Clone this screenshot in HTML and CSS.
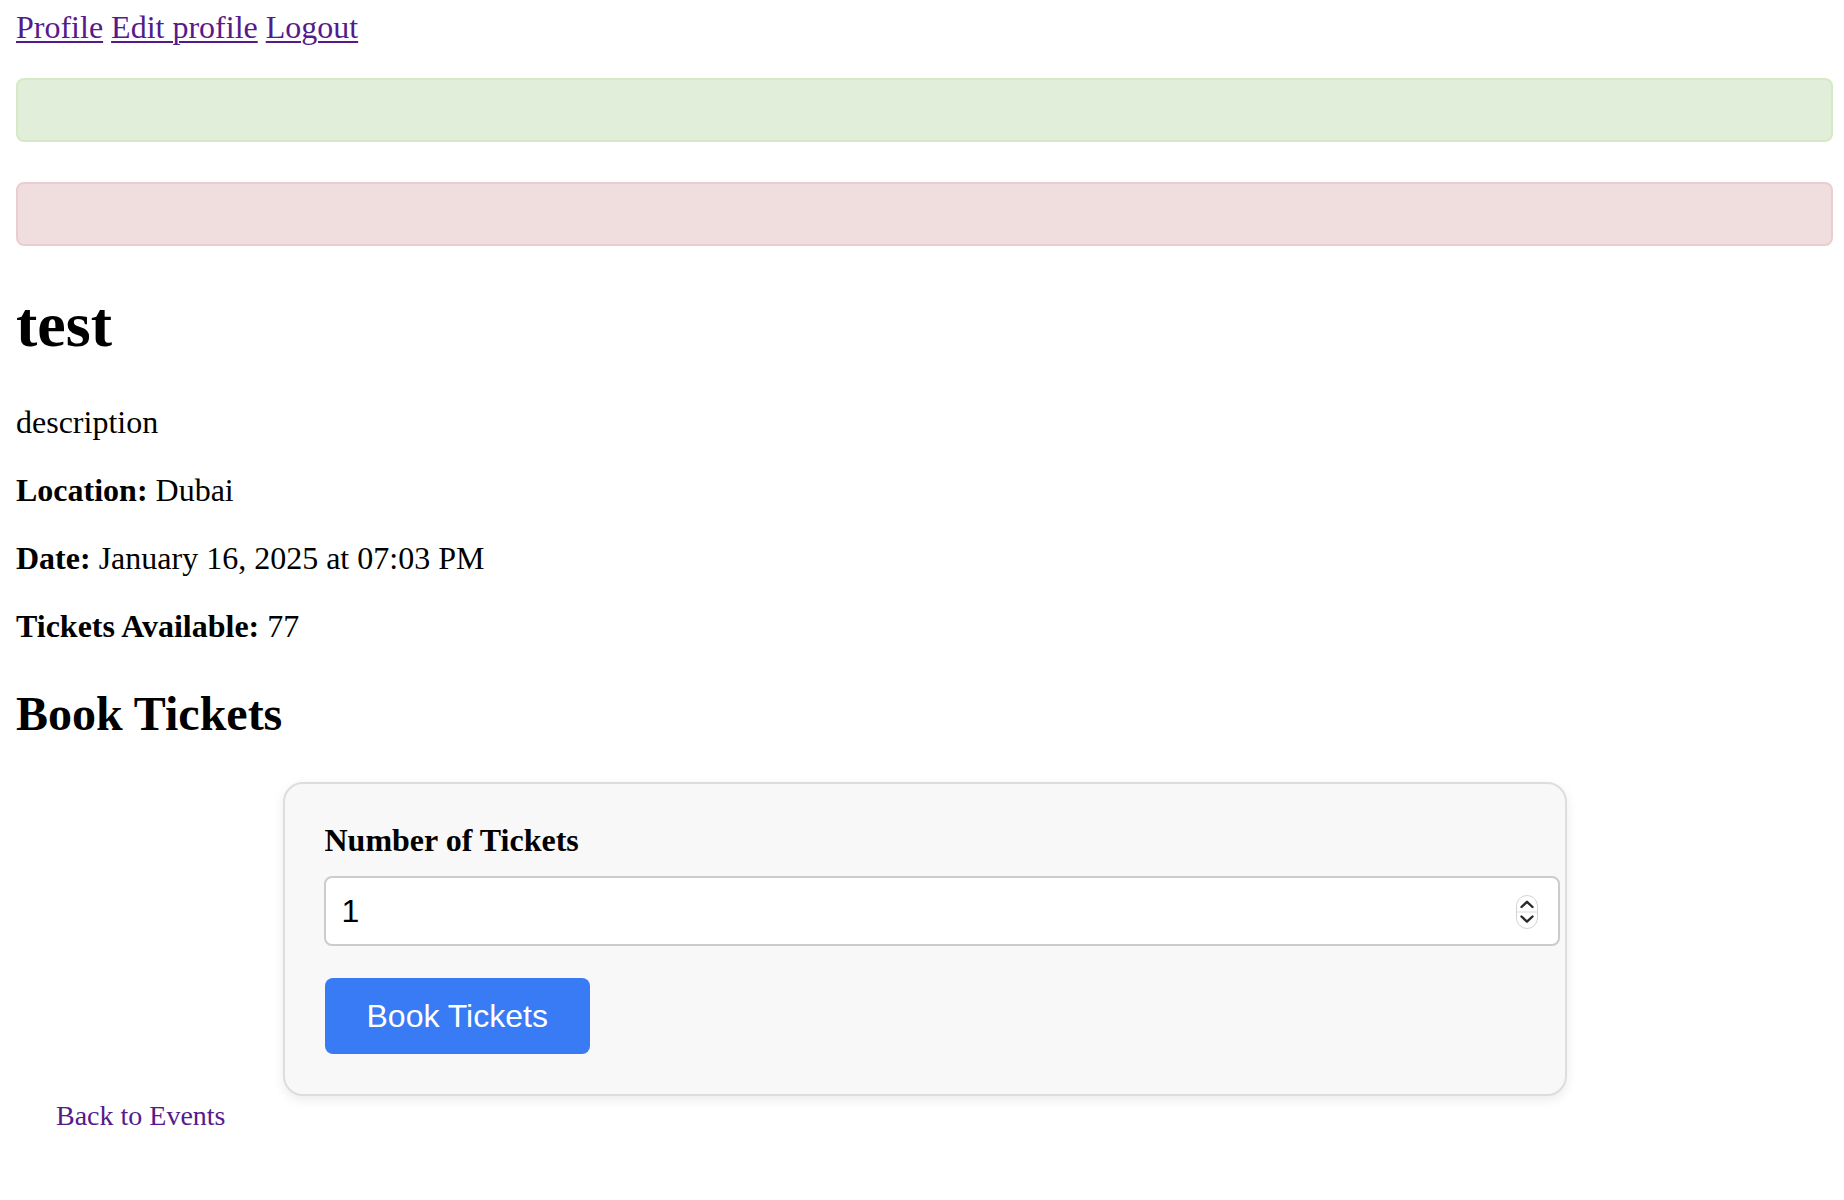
FILE: index.html
```html
<!DOCTYPE html>
<html>
<head>
<meta charset="utf-8">
<title>test</title>
<link rel="stylesheet" href="styles.css">
</head>
<body>
<nav class="topnav">
  <a href="#" class="navlink">Profile</a>
  <a href="#" class="navlink">Edit profile</a>
  <a href="#" class="navlink">Logout</a>
</nav>
<div class="alert alert-success"></div>
<div class="alert alert-danger"></div>
<h1 class="title">test</h1>
<p class="info">description</p>
<p class="info"><strong>Location:</strong> Dubai</p>
<p class="info"><strong>Date:</strong> January 16, 2025 at 07:03 PM</p>
<p class="info"><strong>Tickets Available:</strong> 77</p>
<h2 class="subtitle">Book Tickets</h2>
<form class="card">
  <label class="field-label" for="tickets">Number of Tickets</label>
  <div class="input-wrap">
    <input class="num-input" id="tickets" type="number" value="1" min="1">
    <span class="spinner">
      <svg width="22" height="34" viewBox="0 0 22 34">
        <rect x="0.5" y="0.5" width="21" height="33" rx="10.5" fill="#ffffff" stroke="#d4d4d4"/>
        <line x1="1" y1="17" x2="21" y2="17" stroke="#dcdcdc" stroke-width="1"/>
        <path d="M5.5 12 L11 6.8 L16.5 12" fill="none" stroke="#2a2a2a" stroke-width="2.4" stroke-linecap="round" stroke-linejoin="round"/>
        <path d="M5.5 21.5 L11 26.7 L16.5 21.5" fill="none" stroke="#2a2a2a" stroke-width="2.4" stroke-linecap="round" stroke-linejoin="round"/>
      </svg>
    </span>
  </div>
  <button class="btn" type="button">Book Tickets</button>
</form>
<a href="#" class="back">Back to Events</a>
</body>
</html>
```

FILE: styles.css
```css
html, body {
  background: #ffffff;
}
body {
  margin: 0 11px 0 16px;
  padding-top: 9px;
  font-family: "Liberation Serif", "Times New Roman", serif;
  font-size: 32px;
  line-height: 36px;
  color: #000000;
}
.topnav {
  line-height: 36px;
}
.navlink {
  color: #551a8b;
  text-decoration: underline;
  text-decoration-thickness: 2px;
  text-underline-offset: 3px;
}
.alert {
  border: 2px solid transparent;
  border-radius: 8px;
  box-sizing: border-box;
  height: 64px;
}
.alert-success {
  margin-top: 33px;
  margin-bottom: 40px;
  background: #e1eed9;
  border-color: #d6e9c6;
}
.alert-danger {
  margin-bottom: 40px;
  background: #f0dede;
  border-color: #ebccd1;
}
.title {
  font-size: 64px;
  line-height: 72px;
  font-weight: bold;
  margin: 43px 0;
}
.info {
  margin: 32px 0;
  line-height: 36px;
}
.info strong {
  font-weight: bold;
}
.subtitle {
  font-size: 48px;
  line-height: 54px;
  font-weight: bold;
  margin: 43px 0 41px 0;
}
.card {
  display: block;
  max-width: 1200px;
  margin: 41px auto 0 auto;
  padding: 38px 40px 40px 40px;
  background: #f8f8f8;
  border: 2px solid #dddddd;
  border-radius: 20px;
  box-shadow: 0 4px 12px rgba(0, 0, 0, 0.08);
}
.field-label {
  display: block;
  font-weight: bold;
  font-size: 32px;
  line-height: 36px;
  margin-bottom: 18px;
}
.input-wrap {
  position: relative;
  margin-bottom: 32px;
}
.num-input {
  display: block;
  box-sizing: content-box;
  width: 100%;
  height: 34px;
  padding: 16px;
  margin: 0 0 0 -1px;
  border: 2px solid #cccccc;
  border-radius: 8px;
  background: #ffffff;
  font-family: "Liberation Sans", Arial, sans-serif;
  font-size: 32px;
  line-height: 34px;
  color: #000000;
  outline: none;
  -moz-appearance: textfield;
}
.num-input::-webkit-inner-spin-button,
.num-input::-webkit-outer-spin-button {
  -webkit-appearance: none;
  margin: 0;
}
.spinner {
  position: absolute;
  top: 19px;
  right: -13px;
  width: 22px;
  height: 34px;
  display: block;
  line-height: 0;
}
.btn {
  display: block;
  padding: 20px 42px;
  border: none;
  border-radius: 8px;
  background: #387bf5;
  color: #ffffff;
  font-family: "Liberation Sans", Arial, sans-serif;
  font-size: 32px;
  line-height: 36px;
  cursor: pointer;
}
.back {
  display: inline-block;
  margin-left: 40px;
  margin-top: 2px;
  color: #551a8b;
  text-decoration: none;
  font-size: 28px;
  line-height: 32px;
}
```
